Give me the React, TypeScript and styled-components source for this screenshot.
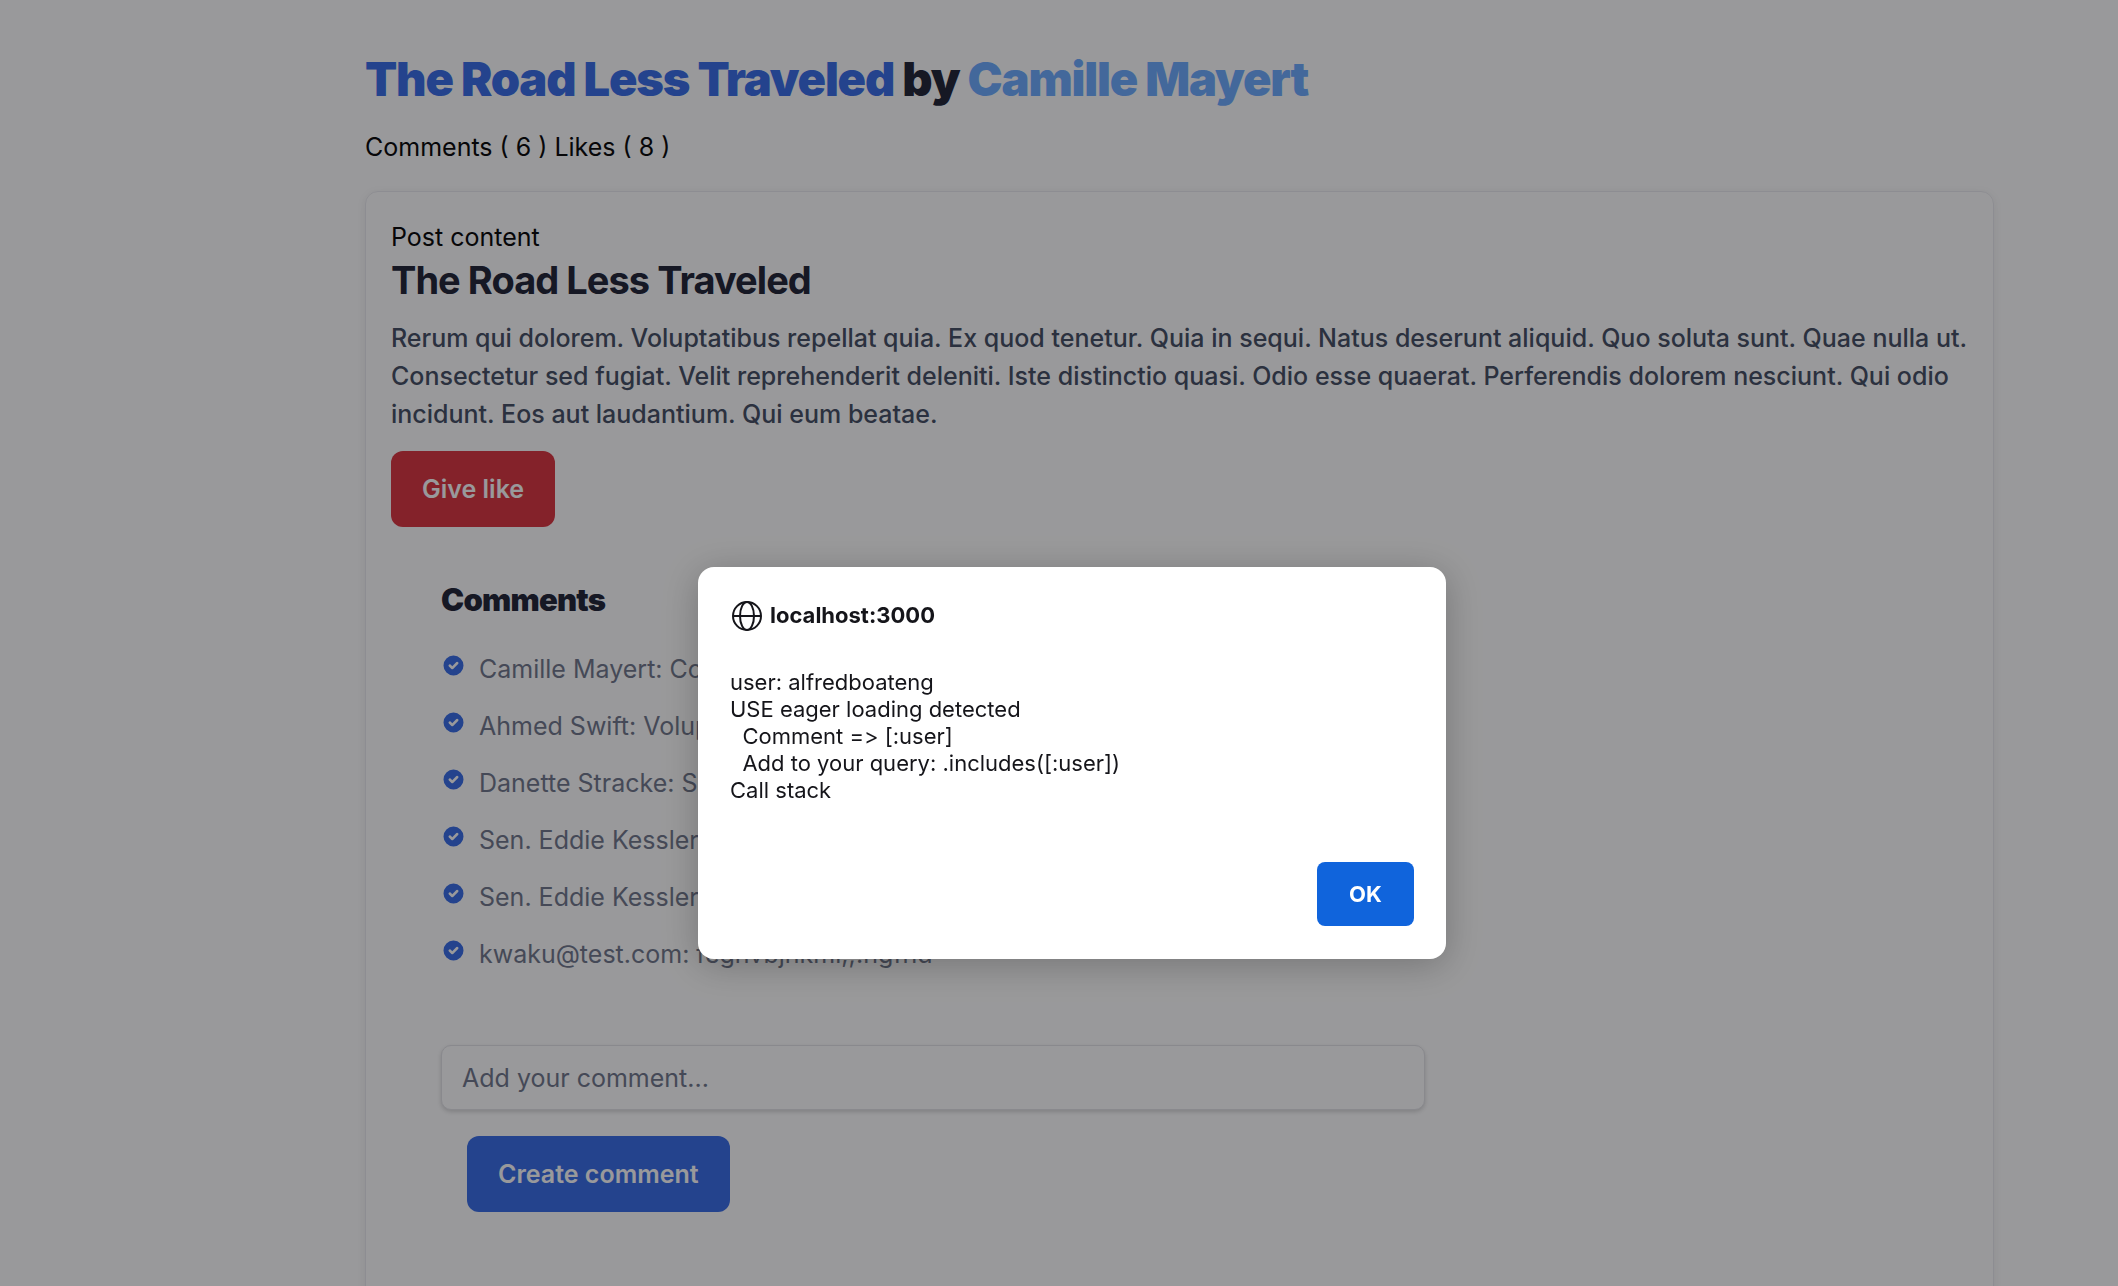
import React from "react";
import styled, { createGlobalStyle } from "styled-components";

const GlobalStyle = createGlobalStyle`
  *, *::before, *::after { box-sizing: border-box; }
  html, body { height: 100%; }
  body {
    margin: 0;
    overflow: hidden;
    background: #ffffff;
    color: #0c0c0c;
    font-family: Inter, "Liberation Sans", sans-serif;
    font-size: 25px;
    line-height: 38px;
  }
  h1, h2, h3, p, ul { margin: 0; padding: 0; }
  button, input { font: inherit; }
`;

const Page = styled.main`
  padding: 50px 124px 0 365px;
`;

const PageTitle = styled.h1`
  margin-bottom: 21px;
  color: #25283a;
  font-size: 47px;
  font-weight: 900;
  line-height: 57px;
  letter-spacing: -0.025em;
`;

const Accent = styled.a<{ $tone: string }>`
  color: ${(p) => p.$tone};
  text-decoration: none;
`;

const Stats = styled.p`
  margin-bottom: 25px;
`;

const Card = styled.article`
  min-height: 1200px;
  padding: 26px 25px;
  border: 1px solid #ececf0;
  border-radius: 13px;
  box-shadow: 0 2px 10px rgba(0, 0, 0, 0.07);
`;

const PostTitle = styled.h2`
  margin-bottom: 15px;
  color: #25283a;
  font-size: 38px;
  font-weight: 700;
  line-height: 48px;
  letter-spacing: -0.025em;
`;

const PostBody = styled.p`
  margin-bottom: 18px;
  color: #495266;
  font-weight: 500;
`;

const ActionButton = styled.button<{ $tone: string }>`
  display: block;
  padding: 19px 31px;
  border: 0;
  border-radius: 12px;
  background: ${(p) => p.$tone};
  color: #ffffff;
  font-weight: 600;
`;

const CommentsSection = styled.section`
  padding: 51px 50px 0;
`;

const CommentsTitle = styled.h3`
  margin-bottom: 28px;
  color: #25283a;
  font-size: 31px;
  font-weight: 900;
  line-height: 44px;
  letter-spacing: -0.025em;
`;

const CommentList = styled.ul`
  display: flex;
  flex-direction: column;
  gap: 19px;
  list-style: none;
`;

const CommentItem = styled.li`
  display: flex;
  gap: 13px;
  color: #747b8e;
`;

const CommentForm = styled.form`
  display: flex;
  flex-direction: column;
  align-items: flex-start;
  gap: 26px;
  margin-top: 72px;
  max-width: 984px;
`;

const CommentInput = styled.input`
  width: 100%;
  height: 65px;
  padding: 0 20px;
  border: 1px solid #e4e4e8;
  border-radius: 10px;
  background: #ffffff;
  box-shadow: 0 2px 4px rgba(0, 0, 0, 0.16);
  color: #25283a;
  &::placeholder { color: #747b8e; opacity: 1; }
`;

const FormActions = styled.div`
  padding-left: 26px;
`;

const Backdrop = styled.div`
  position: fixed;
  inset: 0;
  display: flex;
  align-items: flex-start;
  justify-content: center;
  padding: 567px 0 0 26px;
  background: rgba(0, 0, 4, 0.4);
`;

const Dialog = styled.div`
  display: flex;
  flex-direction: column;
  width: 748px;
  padding: 32px 32px 33px;
  border-radius: 16px;
  background: #ffffff;
  box-shadow: 0 6px 36px rgba(0, 0, 0, 0.24);
  color: #15151a;
  font-size: 22px;
  line-height: 27px;
`;

const DialogHeader = styled.header`
  display: flex;
  align-items: center;
  gap: 8px;
  height: 34px;
  margin-bottom: 36px;
`;

const DialogTitle = styled.h2`
  padding-bottom: 2px;
  font-size: 22px;
  font-weight: 700;
  line-height: 32px;
`;

const DialogMessage = styled.p`
  white-space: pre-wrap;
  font-feature-settings: "calt" 0;
`;

const DialogButton = styled.button`
  align-self: flex-end;
  width: 97px;
  height: 64px;
  margin-top: 58px;
  border: 0;
  border-radius: 8px;
  background: #1064dc;
  color: #ffffff;
  font-weight: 700;
`;

const CheckSvg = styled.svg`
  flex: none;
  width: 25px;
  height: 25px;
  margin-top: 3px;
`;

const GlobeSvg = styled.svg`
  flex: none;
  width: 32px;
  height: 32px;
`;

const CheckIcon = () => (
  <CheckSvg viewBox="0 0 20 20" fill="#3c70e8" aria-hidden="true">
    <path
      fillRule="evenodd"
      clipRule="evenodd"
      d="M10 18a8 8 0 100-16 8 8 0 000 16zm3.707-9.293a1 1 0 00-1.414-1.414L9 10.586 7.707 9.293a1 1 0 00-1.414 1.414l2 2a1 1 0 001.414 0l4-4z"
    />
  </CheckSvg>
);

const GlobeIcon = () => (
  <GlobeSvg viewBox="0 0 32 32" fill="none" stroke="#15151a" strokeWidth="2" aria-hidden="true">
    <circle cx="17" cy="16" r="14" />
    <ellipse cx="17" cy="16" rx="7" ry="14" />
    <path d="M3 16h28" />
  </GlobeSvg>
);

const comments = [
  { author: "Camille Mayert", text: "Consequatur" },
  { author: "Ahmed Swift", text: "Voluptatem" },
  { author: "Danette Stracke", text: "Sit" },
  { author: "Sen. Eddie Kessler", text: "Quia" },
  { author: "Sen. Eddie Kessler", text: "Quia" },
  { author: "kwaku@test.com", text: "feghvbjnkml,;.hgfhd" },
];

const message = `user: alfredboateng
USE eager loading detected
  Comment => [:user]
  Add to your query: .includes([:user])
Call stack`;

export default function App() {
  return (
    <>
      <GlobalStyle />
      <Page>
        <PageTitle>
          <Accent href="#post" $tone="#3c70e8">The Road Less Traveled</Accent> by{" "}
          <Accent href="#author" $tone="#71adff">Camille Mayert</Accent>
        </PageTitle>
        <Stats>Comments ( 6 ) Likes ( 8 )</Stats>
        <Card id="post">
          <p>Post content</p>
          <PostTitle>The Road Less Traveled</PostTitle>
          <PostBody>
            Rerum qui dolorem. Voluptatibus repellat quia. Ex quod tenetur. Quia in sequi. Natus deserunt
            aliquid. Quo soluta sunt. Quae nulla ut. Consectetur sed fugiat. Velit reprehenderit deleniti.
            Iste distinctio quasi. Odio esse quaerat. Perferendis dolorem nesciunt. Qui odio incidunt. Eos
            aut laudantium. Qui eum beatae.
          </PostBody>
          <ActionButton type="button" $tone="#dc3943">Give like</ActionButton>
          <CommentsSection>
            <CommentsTitle>Comments</CommentsTitle>
            <CommentList>
              {comments.map((c, i) => (
                <CommentItem key={i}>
                  <CheckIcon />
                  <span>{c.author}: {c.text}</span>
                </CommentItem>
              ))}
            </CommentList>
            <CommentForm onSubmit={(e) => e.preventDefault()}>
              <CommentInput type="text" aria-label="Comment" placeholder="Add your comment..." />
              <FormActions>
                <ActionButton type="submit" $tone="#3c70e8">Create comment</ActionButton>
              </FormActions>
            </CommentForm>
          </CommentsSection>
        </Card>
      </Page>
      <Backdrop>
        <Dialog role="alertdialog" aria-modal="true" aria-labelledby="dialog-title">
          <DialogHeader>
            <GlobeIcon />
            <DialogTitle id="dialog-title">localhost:3000</DialogTitle>
          </DialogHeader>
          <DialogMessage>{message}</DialogMessage>
          <DialogButton type="button">OK</DialogButton>
        </Dialog>
      </Backdrop>
    </>
  );
}
